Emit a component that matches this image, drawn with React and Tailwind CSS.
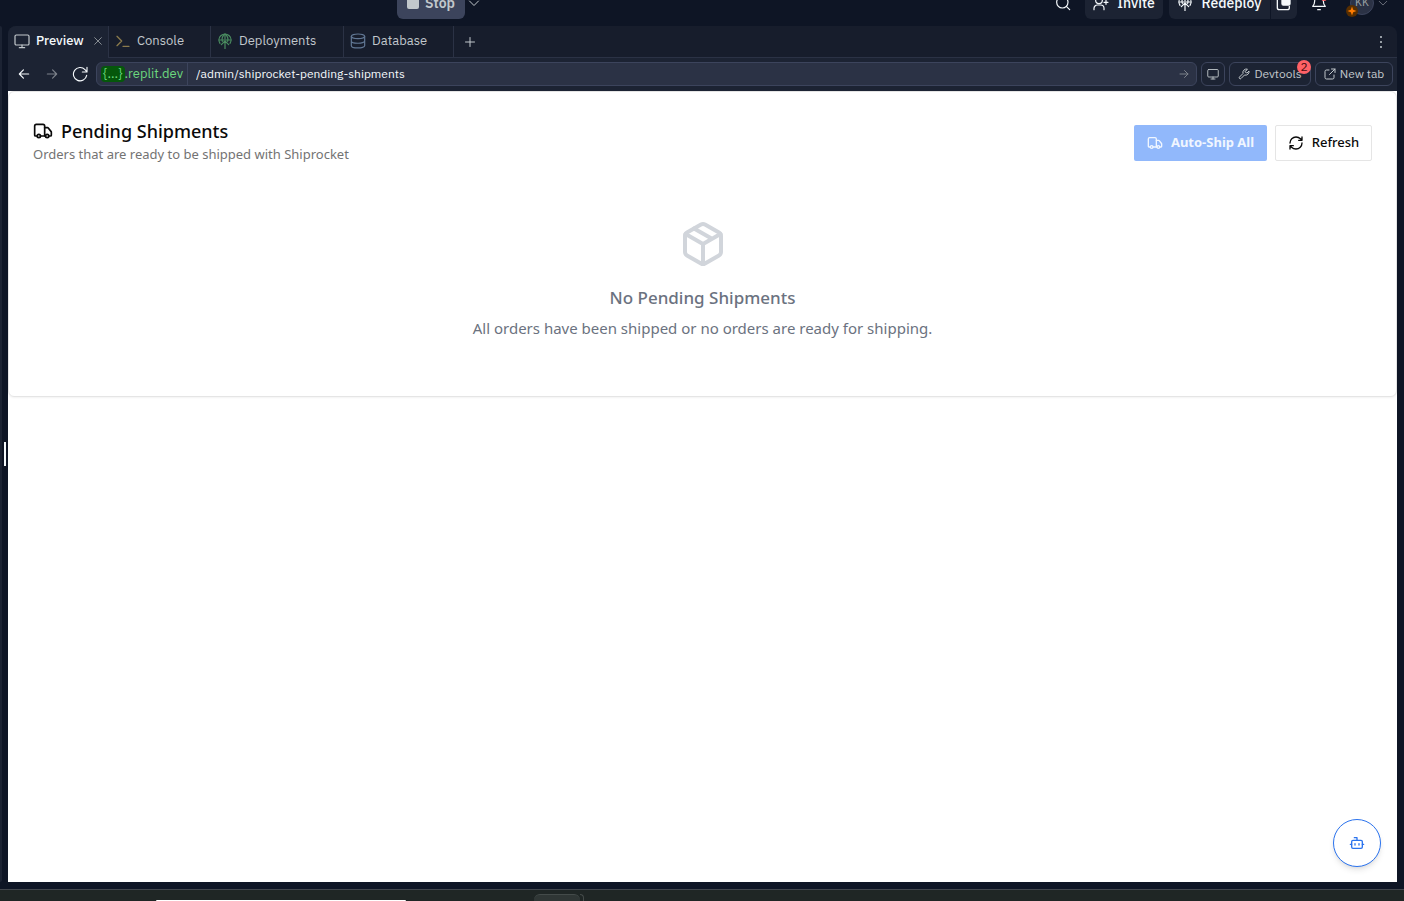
import React from "react";

const Icon = ({ className, stroke = 2, children }) => (
  <svg
    viewBox="0 0 24 24"
    fill="none"
    stroke="currentColor"
    strokeWidth={stroke}
    strokeLinecap="round"
    strokeLinejoin="round"
    aria-hidden="true"
    className={`shrink-0 ${className}`}
  >
    {children}
  </svg>
);

const Monitor = ({ className }) => (
  <Icon className={className} stroke={1.8}>
    <rect x="1.5" y="3" width="21" height="15" rx="2" />
    <path d="M12 18v4M8 22h8" />
  </Icon>
);

const Truck = ({ className }) => (
  <Icon className={className}>
    <path d="M14 18V6a2 2 0 0 0-2-2H4a2 2 0 0 0-2 2v11a1 1 0 0 0 1 1h2" />
    <path d="M15 18H9" />
    <path d="M19 18h2a1 1 0 0 0 1-1v-3.65a1 1 0 0 0-.22-.624l-3.48-4.35A1 1 0 0 0 17.52 8H14" />
    <circle cx="17" cy="18" r="2" />
    <circle cx="7" cy="18" r="2" />
  </Icon>
);

const Deploy = ({ className }) => (
  <Icon className={className} stroke={1.8}>
    <path d="M4.500 15.500A9 9 0 1 1 19.500 15.500" />
    <path d="M3 10.500h18M8 12.500C6.500 9 8.500 3.500 12 1.500c3.500 2 5.500 7.500 4 11" />
    <path d="M12 2v7M12 23.500V12M6.500 17.500l5.500-5.500 5.500 5.500" />
  </Icon>
);

const ArrowRight = ({ className }) => (
  <Icon className={className} stroke={2}>
    <path d="M4 12h16M13 5l7 7-7 7" />
  </Icon>
);

const ChevronDown = ({ className }) => (
  <Icon className={className}>
    <path d="m3 8 9 9 9-9" />
  </Icon>
);

function TopBar() {
  return (
    <header className="flex h-[26px] shrink-0 items-end overflow-hidden pb-[7px] text-sm font-medium text-[#f5f9fc]">
      <div className="flex flex-1 items-center pl-[397px]">
        <button className="flex h-8 w-[68px] shrink-0 items-center justify-center gap-1.5 rounded-md bg-[#3c445c] font-semibold text-[#c2c8cc]">
          <span className="h-3 w-3 rounded-xs bg-[#c2c8cc]" />
          Stop
        </button>
        <button aria-label="Run options" className="flex h-8 w-[18px] items-center justify-center text-[#c2c8cc]">
          <ChevronDown className="h-3 w-3" />
        </button>
      </div>
      <div className="flex items-center pr-4">
        <button aria-label="Search" className="mr-3 flex h-8 w-5 items-center justify-center">
          <Icon className="h-4 w-4" stroke={1.8}>
            <circle cx="11" cy="11" r="8.500" />
            <path d="m17 17 5 5" />
          </Icon>
        </button>
        <button className="mr-1.5 flex h-8 w-[78px] items-center justify-center gap-2 rounded-md bg-[#1c2333]">
          <Icon className="h-4 w-4" stroke={1.8}>
            <circle cx="9" cy="8" r="5" />
            <path d="M1.500 22v-2a5 5 0 0 1 5-5h5a5 5 0 0 1 5 5v2M19.500 8v6M16.500 11h6" />
          </Icon>
          Invite
        </button>
        <button className="flex h-8 w-[101px] items-center justify-center gap-2 rounded-l-md bg-[#1c2333]">
          <Deploy className="h-4 w-4" />
          Redeploy
        </button>
        <button aria-label="Deployment panel" className="ml-px flex h-8 w-[26px] items-center justify-center rounded-r-md bg-[#1c2333]">
          <Icon className="h-4 w-4">
            <path d="M6 3H5a3 3 0 0 0-3 3v13a3 3 0 0 0 3 3h12a3 3 0 0 0 3-3v-2" />
            <rect x="9" y="2" width="12" height="13" rx="2" fill="currentColor" />
          </Icon>
        </button>
        <button aria-label="Notifications" className="relative ml-3 flex h-8 w-5 items-center justify-center">
          <Icon className="h-4 w-4" stroke={1.8}>
            <path d="M2.500 17c3-3 3-6 3-8a6.500 6.500 0 0 1 13 0c0 2 0 5 3 8ZM10 22h4" />
          </Icon>
          <span className="absolute top-2 right-0.5 h-1.5 w-1.5 rounded-full bg-[#ff6166]" />
        </button>
        <button aria-label="Account" className="relative ml-[21px] flex h-8 items-center gap-1">
          <span className="flex h-6 w-6 items-center justify-center rounded-full border border-[#3c445c] bg-[#2b3245] text-[11px] font-normal text-[#9da2a6]">
            KK
          </span>
          <span className="absolute bottom-0.5 -left-1 flex h-3 w-3 items-center justify-center rounded-full bg-[#572e00]">
            <svg viewBox="0 0 12 12" className="h-3 w-3" aria-hidden="true">
              <path d="M6 1.500 7.200 4.800 10.500 6 7.200 7.200 6 10.500 4.800 7.200 1.500 6 4.800 4.800Z" fill="#ff7b00" />
            </svg>
          </span>
          <ChevronDown className="h-2.5 w-2.5 text-[#7d828b]" />
        </button>
      </div>
    </header>
  );
}

function Tabs() {
  const tab = "flex items-center border-r border-b border-[#2b3245] pb-px text-[#c2c8cc]";
  return (
    <nav className="flex h-8 shrink-0 items-stretch rounded-t-lg bg-[#171d2c] text-[13px] leading-4">
      <div className="flex w-[101px] items-center rounded-tl-lg border-r border-[#2b3245] bg-[#1c2333] pr-[5px] pb-0.5 pl-1.5">
        <button className="flex flex-1 items-center gap-1.5 font-medium text-[#f5f9fc]">
          <Monitor className="h-4 w-4 text-[#c2c8cc]" />
          Preview
        </button>
        <button aria-label="Close Preview" className="text-[#9da2a6]">
          <Icon className="h-2.5 w-2.5">
            <path d="m4 4 16 16M20 4 4 20" />
          </Icon>
        </button>
      </div>
      <button className={`${tab} w-[102px] gap-1.5 pl-1.5`}>
        <Icon className="h-4 w-4 text-[#8a7a4c]">
          <path d="m3 5 7 7-7 7M12 20h9" />
        </Icon>
        Console
      </button>
      <button className={`${tab} w-[133px] gap-1.5 pl-1.5`}>
        <Deploy className="h-4 w-4 text-[#4a8b60]" />
        Deployments
      </button>
      <button className={`${tab} w-[110px] gap-1.5 pl-1.5`}>
        <Icon className="h-4 w-4 text-[#617794]" stroke={1.8}>
          <ellipse cx="12" cy="5" rx="10" ry="3.500" />
          <path d="M2 5v14c0 4.500 20 4.500 20 0V5M2 12c0 4.500 20 4.500 20 0" />
        </Icon>
        Database
      </button>
      <div className="flex flex-1 items-center justify-between border-b border-[#2b3245] pr-2 pl-2.5 text-[#c2c8cc]">
        <button aria-label="New tab">
          <Icon className="h-3 w-3">
            <path d="M12 3v18M3 12h18" />
          </Icon>
        </button>
        <button aria-label="Pane menu">
          <svg viewBox="0 0 16 16" fill="currentColor" className="h-4 w-4" aria-hidden="true">
            <circle cx="8" cy="3" r="1" />
            <circle cx="8" cy="8" r="1" />
            <circle cx="8" cy="13" r="1" />
          </svg>
        </button>
      </div>
    </nav>
  );
}

function Toolbar() {
  const nav = "flex h-6 w-7 items-center justify-center";
  const box = "flex h-6 shrink-0 items-center justify-center gap-1 rounded-md border border-[#3c445c] text-[#c2c8cc]";
  return (
    <div className="flex h-[33px] shrink-0 items-start bg-[#1c2333] pt-1 pr-1 pl-0.5 text-xs">
      <button aria-label="Back" className={`${nav} text-[#f5f9fc]`}>
        <ArrowRight className="h-3.5 w-3.5 rotate-180" />
      </button>
      <button aria-label="Forward" className={`${nav} text-[#7d828b]`}>
        <ArrowRight className="h-3.5 w-3.5" />
      </button>
      <button aria-label="Reload" className={`${nav} text-[#f5f9fc]`}>
        <Icon className="h-4 w-4" stroke={1.7}>
          <path d="M22.500 2v7h-7M22.500 9l-3-3.500A10 10 0 1 0 22 14" />
        </Icon>
      </button>
      <div className="ml-0.5 flex h-6 min-w-0 flex-1 items-center rounded-md border border-[#3c445c] bg-[#2b3245]">
        <button className="flex h-full shrink-0 items-center border-r border-[#3c445c] pr-1 pl-1 text-[13px] text-[#6cd97e]">
          <span className="rounded-sm bg-[#05570b] px-0.5 leading-4">{"{...}"}</span>.replit.dev
        </button>
        <input
          aria-label="Path"
          defaultValue="/admin/shiprocket-pending-shipments"
          className="min-w-0 flex-1 bg-transparent px-2 text-xs text-[#f5f9fc] outline-none"
        />
        <button aria-label="Go" className="pr-1.5 text-[#7d828b]">
          <ArrowRight className="h-3 w-3" />
        </button>
      </div>
      <div className="ml-1 flex gap-1">
        <button aria-label="Device size" className={`${box} w-6`}>
          <Monitor className="h-3 w-3" />
        </button>
        <button className={`${box} relative w-[82px]`}>
          <Icon className="h-3 w-3">
            <path d="M15 6a1 1 0 0 0 0 2l2 2a1 1 0 0 0 1 0l4-4a7 7 0 0 1-9 8l-7 7a2 2 0 0 1-3-3l7-7a7 7 0 0 1 8-9Z" />
          </Icon>
          Devtools
          <span className="absolute -top-[3px] -right-px flex h-3.5 w-3.5 items-center justify-center rounded-full bg-[#ff6166] text-xs text-[#4a0c0e]">
            2
          </span>
        </button>
        <button className={`${box} w-[78px]`}>
          <Icon className="h-3 w-3">
            <path d="M15 2h7v7M22 2 11 13M10 4H5a3 3 0 0 0-3 3v12a3 3 0 0 0 3 3h12a3 3 0 0 0 3-3v-5" />
          </Icon>
          New tab
        </button>
      </div>
    </div>
  );
}

function Page() {
  return (
    <main className="relative min-h-0 flex-1 bg-white font-['Noto_Sans',sans-serif]">
      <section className="rounded-md border border-[#e5e5e5] px-6 pt-6 pb-14 shadow-xs">
        <div className="flex items-center justify-between">
          <div className="pt-px pb-1">
            <h1 className="flex items-center gap-2 text-lg leading-7 font-medium text-[#0a0a0a]">
              <Truck className="h-5 w-5" />
              Pending Shipments
            </h1>
            <p className="-mt-px text-[13px] leading-5 text-[#737373]">Orders that are ready to be shipped with Shiprocket</p>
          </div>
          <div className="flex gap-2 pt-0.5 text-[13px]">
            <button disabled className="flex h-9 w-[133px] items-center justify-center gap-2 rounded-xs bg-[#91b8fb] font-bold text-[#f0f6ff]">
              <Truck className="h-4 w-4" />
              Auto-Ship All
            </button>
            <button className="flex h-9 w-[97px] items-center justify-center gap-2 rounded-xs border border-[#e5e5e5] font-medium text-[#0a0a0a]">
              <Icon className="h-4 w-4">
                <path d="M3 12a9 9 0 0 1 9-9 9.750 9.750 0 0 1 6.740 2.740L21 8M21 3v5h-5M21 12a9 9 0 0 1-9 9 9.750 9.750 0 0 1-6.740-2.740L3 16M8 16H3v5" />
              </Icon>
              Refresh
            </button>
          </div>
        </div>
        <div className="flex flex-col items-center pt-[52px] text-center text-[#6b7280]">
          <Icon className="h-12 w-12 text-[#d1d5db]">
            <path d="M21 8a2 2 0 0 0-1-1.730l-7-4a2 2 0 0 0-2 0l-7 4A2 2 0 0 0 3 8v8a2 2 0 0 0 1 1.730l7 4a2 2 0 0 0 2 0l7-4A2 2 0 0 0 21 16Z" />
            <path d="m7.500 4.270 9 5.150M3.300 7l8.700 5 8.700-5M12 22V12" />
          </Icon>
          <h2 className="mt-4 text-[17px] leading-7 font-medium">No Pending Shipments</h2>
          <p className="mt-1 text-[15px] leading-6">All orders have been shipped or no orders are ready for shipping.</p>
        </div>
      </section>
      <button
        aria-label="Open assistant"
        className="absolute right-4 bottom-[15px] flex h-12 w-12 items-center justify-center rounded-full border border-[#2b73ee] bg-white text-[#2b73ee] shadow-md"
      >
        <Icon className="h-4 w-4">
          <path d="M12 8V4H8" />
          <rect x="4" y="8" width="16" height="12" rx="2" />
          <path d="M2 14h2M20 14h2M15 13v2M9 13v2" />
        </Icon>
      </button>
    </main>
  );
}

export default function App() {
  return (
    <div className="flex h-screen flex-col overflow-hidden bg-[#0e1525] font-['IBM_Plex_Sans','Liberation_Sans',sans-serif]">
      <TopBar />
      <div className="flex min-h-0 flex-1 pr-[7px]">
        <div className="w-0.5 shrink-0 rounded-r-sm bg-[#1c2333]" />
        <div className="flex w-1.5 shrink-0 items-center justify-center">
          <span className="h-6 w-0.5 bg-[#f5f9fc]" />
        </div>
        <div className="flex min-w-0 flex-1 flex-col">
          <Tabs />
          <Toolbar />
          <Page />
        </div>
      </div>
      <footer className="mt-[7px] flex h-3 shrink-0 items-end overflow-hidden border-t border-[#42464d] bg-[#1f2625]">
        <div className="ml-[156px] h-px w-[250px] shrink-0 rounded-t-sm bg-white" />
        <div className="ml-32 h-[7px] w-[46px] shrink-0 rounded-t-md border-t border-[#444b4a] bg-[#2f3635]" />
        <div className="h-[7px] w-1 shrink-0 rounded-tr-md border-t border-r border-[#444b4a]" />
      </footer>
    </div>
  );
}
